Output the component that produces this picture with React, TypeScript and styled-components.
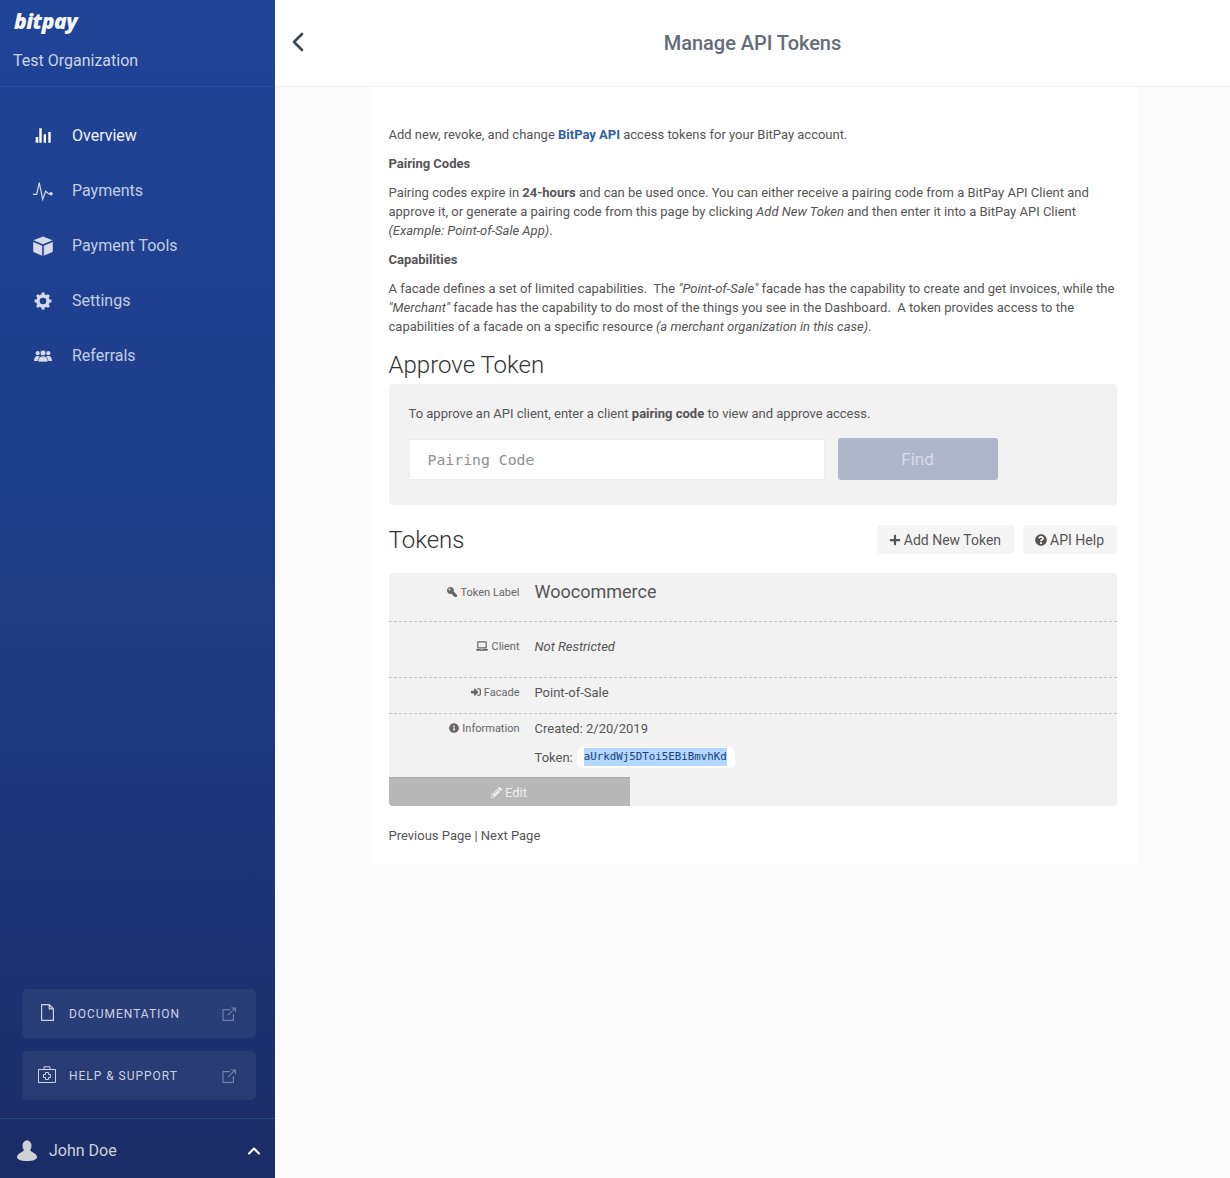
import { FC, ReactNode } from 'react';
import styled, { createGlobalStyle } from 'styled-components';
import { FaInfoCircle, FaKey, FaLaptop, FaPencilAlt, FaPlus, FaQuestionCircle, FaSignInAlt } from 'react-icons/fa';
import { FiChevronLeft, FiChevronUp } from 'react-icons/fi';

const GlobalStyle = createGlobalStyle`
  html, body { margin: 0; padding: 0; }
  body { font-family: Roboto, "Liberation Sans", sans-serif; color: #555; background: #fbfbfb; }
  * { box-sizing: border-box; }
`;

const Page = styled.div`
  display: flex;
  width: 1230px;
  height: 1178px;
  overflow: hidden;
`;

const Sidebar = styled.aside`
  width: 275px;
  flex: none;
  display: flex;
  flex-direction: column;
  background: linear-gradient(180deg, #1f4496 0%, #1f3e8a 40%, #1b2d66 100%);
  color: #fff;
`;

const Brand = styled.div`
  height: 87px;
  padding: 6px 0 0 14px;
  border-bottom: 1px solid rgba(255, 255, 255, 0.06);
`;

const Logo = styled.div`
  font-family: 'Open Sans', sans-serif;
  font-style: italic;
  font-weight: 800;
  font-size: 21px;
  line-height: 30px;
  letter-spacing: -0.5px;
  color: #f4f6fb;
`;

const OrgName = styled.div`
  margin: 14px 0 0 -1px;
  font-size: 16px;
  line-height: 22px;
  color: #ccd4e8;
`;

const Nav = styled.nav`
  flex: 1;
  padding-top: 21px;
`;

const NavItem = styled.div<{ $active?: boolean }>`
  height: 55px;
  display: flex;
  align-items: center;
  font-size: 16px;
  color: ${(p) => (p.$active ? '#f2f4fa' : '#c3cde6')};
`;

const NavIcon = styled.span<{ $active?: boolean }>`
  width: 72px;
  padding-left: 33px;
  display: flex;
  color: ${(p) => (p.$active ? '#ffffff' : '#d5dbec')};
`;

const ExternalLink = styled.div`
  height: 49px;
  margin: 0 19px 13px 22px;
  padding: 0 19px 0 16px;
  display: flex;
  align-items: center;
  border-radius: 5px;
  background: rgba(255, 255, 255, 0.06);
  font-size: 12px;
  letter-spacing: 0.97px;
  color: #ccd3e6;
`;

const LinkIcon = styled.span`
  width: 31px;
  padding-bottom: 3px;
  display: flex;
`;

const LinkText = styled.span`
  flex: 1;
`;

const UserRow = styled.div`
  height: 60px;
  margin-top: 5px;
  padding: 4px 11px 0 17px;
  display: flex;
  align-items: center;
  border-top: 1px solid rgba(70, 130, 130, 0.35);
  font-size: 16px;
  color: #ccd1de;
`;

const UserName = styled.span`
  flex: 1;
  margin-left: 12px;
`;

const Main = styled.main`
  flex: 1;
  min-width: 0;
`;

const Header = styled.header`
  height: 87px;
  display: flex;
  align-items: center;
  justify-content: center;
  position: relative;
  background: #fff;
  border-bottom: 1px solid #eeeeee;
`;

const BackButton = styled.span`
  position: absolute;
  left: 7px;
  top: 26px;
  display: flex;
  color: #3f4654;
`;

const Title = styled.h1`
  margin: 0;
  font-size: 20px;
  font-weight: 500;
  letter-spacing: -0.03px;
  color: #666b78;
`;

const Card = styled.section`
  width: 769px;
  margin-left: 94px;
  padding: 38px 21px 19px 19.5px;
  background: #fff;
`;

const Para = styled.p`
  margin: 0 0 10px;
  font-size: 13px;
  line-height: 19px;
`;

const ApiLink = styled.b`
  color: #2f5f9e;
  font-weight: 700;
`;

const SectionTitle = styled.h2`
  margin: 15px 0 0;
  font-size: 24px;
  font-weight: 300;
  line-height: 29px;
  color: #333;
`;

const ApproveBox = styled.div`
  height: 121px;
  margin-top: 4px;
  padding: 20px 20px 0;
  background: #f2f2f2;
  border-radius: 4px;
`;

const ApproveForm = styled.div`
  display: flex;
  align-items: center;
  margin-top: 15px;
  gap: 13px;
`;

const CodeInput = styled.input`
  width: 416px;
  height: 41px;
  padding: 0 18px;
  border: 1px solid #ececec;
  background: #fff;
  font-family: 'DejaVu Sans Mono', monospace;
  font-size: 14.8px;
  outline: none;
  &::placeholder { color: #8f8f8f; opacity: 1; }
`;

const FindButton = styled.button`
  width: 160px;
  height: 42px;
  border: 0;
  border-radius: 3px;
  background: #aeb7ca;
  font-family: inherit;
  font-size: 17px;
  color: #d8dce5;
`;

const TokensBar = styled.div`
  display: flex;
  align-items: flex-start;
  margin-top: 20px;
  gap: 9px;
`;

const TokensTitle = styled(SectionTitle)`
  flex: 1;
  margin-top: 1px;
`;

const SmallButton = styled.span`
  height: 29px;
  padding: 0 13px 0 12px;
  display: flex;
  align-items: center;
  gap: 3px;
  background: #f5f5f5;
  border-radius: 3px;
  font-size: 14px;
  color: #555;
`;

const TokenCard = styled.div`
  margin-top: 18px;
  background: #f2f2f2;
  border-radius: 4px;
  overflow: hidden;
`;

const TokenRow = styled.div<{ $height: number; $top?: number; $last?: boolean }>`
  display: flex;
  height: ${(p) => p.$height}px;
  padding-top: ${(p) => p.$top ?? 0}px;
  border-bottom: ${(p) => (p.$last ? '0' : '1px dashed #c4c4c4')};
`;

const RowLabel = styled.div`
  width: 131px;
  height: 28px;
  display: flex;
  align-items: center;
  justify-content: flex-end;
  gap: 3px;
  font-size: 11px;
  color: #666;
`;

const RowValue = styled.div`
  margin-left: 15px;
  font-size: 13px;
  color: #555;
`;

const FlippedKey = styled(FaKey)`
  transform: scaleX(-1);
`;

const TokenName = styled.div`
  font-size: 18px;
  line-height: 28px;
`;

const ValueLine = styled.div<{ $gap?: number }>`
  display: flex;
  align-items: center;
  height: 28px;
  margin-top: ${(p) => p.$gap ?? 0}px;
`;

const TokenChip = styled.span`
  margin-left: 4px;
  padding: 0 8px 0 7px;
  height: 21px;
  display: flex;
  align-items: center;
  background: #fff;
  border-radius: 5px;
  font-family: 'DejaVu Sans Mono', monospace;
  font-size: 10.8px;
  color: #14407f;
`;

const Selected = styled.span`
  line-height: 18px;
  background: #b3d7ff;
`;

const EditButton = styled.div`
  width: 241px;
  height: 29px;
  display: flex;
  align-items: center;
  justify-content: center;
  gap: 3px;
  background: #b8b8b8;
  border-top: 1px solid #aaa;
  font-size: 13px;
  color: #eee;
`;

const Pager = styled.div`
  margin-top: 20px;
  font-size: 13px;
  line-height: 19px;
  color: #555;
`;

const Label: FC<{ icon: ReactNode; children: ReactNode }> = ({ icon, children }) => (
  <RowLabel>
    {icon}
    {children}
  </RowLabel>
);

const OverviewIcon = () => (
  <svg width="20" height="20" viewBox="0 0 20 20" fill="currentColor">
    <path d="M2.7 11h2.6v5.7H2.7zM6.3 2.3h2.4v14.4H6.3zM10.7 8.3H13v8.4h-2.3zM15.3 6h2.4v10.7h-2.4z" />
  </svg>
);

const PaymentsIcon = () => (
  <svg width="20" height="20" viewBox="0 0 20 20" fill="none" stroke="currentColor" strokeWidth="1.2">
    <path d="M0 13.3h3.7L6.3 1.7l3.4 16.6 3-8.3 2.6 2.7H18" />
    <circle cx="18" cy="12.7" r="1.8" fill="currentColor" stroke="none" />
  </svg>
);

const CubeIcon = () => (
  <svg width="20" height="20" viewBox="0 0 20 20" fill="currentColor">
    <path d="M10 .4l9.6 3.9L10 8.3.4 4.3zM.2 5.9l9 3.8v10L1 16.2a1.2 1.2 0 0 1-.8-1.1zM19.8 5.9l-9 3.8v10l8.2-3.5a1.2 1.2 0 0 0 .8-1.1z" />
  </svg>
);

const GearIcon = () => (
  <svg width="20" height="20" viewBox="0 0 20 20" fill="none" stroke="currentColor">
    <circle cx="10" cy="10" r="5" strokeWidth="3.4" />
    {[0, 45, 90, 135].map((angle) => (
      <path key={angle} d="M10 1.6v16.8" strokeWidth="3" transform={`rotate(${angle} 10 10)`} strokeDasharray="2.6 11.6" />
    ))}
  </svg>
);

const ReferralsIcon = () => (
  <svg width="20" height="20" viewBox="0 0 20 20" fill="currentColor">
    <circle cx="4.7" cy="7.2" r="2.1" />
    <circle cx="15.3" cy="7.2" r="2.1" />
    <path d="M1 15c0-3.4 1.4-5 3.7-5s3.7 1.6 3.7 5zM11.6 15c0-3.4 1.4-5 3.7-5s3.7 1.6 3.7 5z" />
    <circle cx="10" cy="7" r="2.9" stroke="#1f3d88" strokeWidth=".7" />
    <path d="M5 16c0-4 2-6 5-6s5 2 5 6z" stroke="#1f3d88" strokeWidth=".7" />
  </svg>
);

const DocIcon = () => (
  <svg width="19" height="17" viewBox="0 0 19 17" fill="none" stroke="currentColor" strokeWidth="1.2">
    <path d="M3.6.6h7.6l4.2 4.2v11.6H3.6zM11.2.6v4.2h4.2" />
  </svg>
);

const KitIcon = () => (
  <svg width="19" height="17" viewBox="0 0 19 17" fill="none" stroke="currentColor">
    <path d="M.5 3.5h17v13H.5zM6 3.5V.8h6v2.7M7.5 6.5h3v2h2v3h-2v2h-3v-2h-2v-3h2z" />
  </svg>
);

const ExternalIcon = () => (
  <svg width="15" height="14" viewBox="0 0 15 14" fill="none" stroke="#6f7ea8" strokeWidth="1.2">
    <path d="M8 2.6H1v10.8h10.400V7M6 8.200L13 1M9 1h4.400v4.200" />
  </svg>
);

const UserIcon = () => (
  <svg width="20" height="21" viewBox="0 0 20 21" fill="#cfd0d4">
    <ellipse cx="10" cy="6" rx="4.5" ry="5.8" />
    <path d="M7 9.5c0 2.5-7 3.500-7 7.500 0 2.500 4 4 10 4s10-1.500 10-4c0-4-7-5-7-7.500z" />
  </svg>
);

export default function App() {
  return (
    <>
      <GlobalStyle />
      <Page>
        <Sidebar>
          <Brand>
            <Logo>bitpay</Logo>
            <OrgName>Test Organization</OrgName>
          </Brand>
          <Nav>
            <NavItem $active>
              <NavIcon $active>
                <OverviewIcon />
              </NavIcon>
              Overview
            </NavItem>
            <NavItem>
              <NavIcon>
                <PaymentsIcon />
              </NavIcon>
              Payments
            </NavItem>
            <NavItem>
              <NavIcon>
                <CubeIcon />
              </NavIcon>
              Payment Tools
            </NavItem>
            <NavItem>
              <NavIcon>
                <GearIcon />
              </NavIcon>
              Settings
            </NavItem>
            <NavItem>
              <NavIcon>
                <ReferralsIcon />
              </NavIcon>
              Referrals
            </NavItem>
          </Nav>
          <ExternalLink>
            <LinkIcon>
              <DocIcon />
            </LinkIcon>
            <LinkText>DOCUMENTATION</LinkText>
            <ExternalIcon />
          </ExternalLink>
          <ExternalLink>
            <LinkIcon>
              <KitIcon />
            </LinkIcon>
            <LinkText>HELP &amp; SUPPORT</LinkText>
            <ExternalIcon />
          </ExternalLink>
          <UserRow>
            <UserIcon />
            <UserName>John Doe</UserName>
            <FiChevronUp size={20} color="#fff" strokeWidth={2.5} />
          </UserRow>
        </Sidebar>
        <Main>
          <Header>
            <BackButton>
              <FiChevronLeft size={32} />
            </BackButton>
            <Title>Manage API Tokens</Title>
          </Header>
          <Card>
            <Para>
              Add new, revoke, and change <ApiLink>BitPay API</ApiLink> access tokens for your BitPay account.
            </Para>
            <Para>
              <b>Pairing Codes</b>
            </Para>
            <Para>
              Pairing codes expire in <b>24-hours</b> and can be used once. You can either receive a pairing code from a
              BitPay API Client and approve it, or generate a pairing code from this page by clicking{' '}
              <i>Add New Token</i> and then enter it into a BitPay API Client <i>(Example: Point-of-Sale App)</i>.
            </Para>
            <Para>
              <b>Capabilities</b>
            </Para>
            <Para>
              A facade defines a set of limited capabilities.&nbsp; The <i>"Point-of-Sale"</i> facade has the capability
              to create and get invoices, while the <i>"Merchant"</i> facade has the capability to do most of the things
              you see in the Dashboard.&nbsp; A token provides access to the capabilities of a facade on a specific
              resource <i>(a merchant organization in this case)</i>.
            </Para>
            <SectionTitle>Approve Token</SectionTitle>
            <ApproveBox>
              <Para>
                To approve an API client, enter a client <b>pairing code</b> to view and approve access.
              </Para>
              <ApproveForm>
                <CodeInput placeholder="Pairing Code" />
                <FindButton>Find</FindButton>
              </ApproveForm>
            </ApproveBox>
            <TokensBar>
              <TokensTitle>Tokens</TokensTitle>
              <SmallButton>
                <FaPlus size={12} /> Add New Token
              </SmallButton>
              <SmallButton>
                <FaQuestionCircle size={12} /> API Help
              </SmallButton>
            </TokensBar>
            <TokenCard>
              <TokenRow $height={49} $top={5}>
                <Label icon={<FlippedKey size={10} />}>Token Label</Label>
                <RowValue>
                  <TokenName>Woocommerce</TokenName>
                </RowValue>
              </TokenRow>
              <TokenRow $height={56} $top={10}>
                <Label icon={<FaLaptop size={12} />}>Client</Label>
                <RowValue>
                  <ValueLine>
                    <i>Not Restricted</i>
                  </ValueLine>
                </RowValue>
              </TokenRow>
              <TokenRow $height={36}>
                <Label icon={<FaSignInAlt size={10} />}>Facade</Label>
                <RowValue>
                  <ValueLine>Point-of-Sale</ValueLine>
                </RowValue>
              </TokenRow>
              <TokenRow $height={63} $last>
                <Label icon={<FaInfoCircle size={10} />}>Information</Label>
                <RowValue>
                  <ValueLine>Created: 2/20/2019</ValueLine>
                  <ValueLine $gap={1}>
                    Token:
                    <TokenChip>
                      <Selected>aUrkdWj5DToi5EBiBmvhKd</Selected>
                    </TokenChip>
                  </ValueLine>
                </RowValue>
              </TokenRow>
              <EditButton>
                <FaPencilAlt size={11} /> Edit
              </EditButton>
            </TokenCard>
            <Pager>Previous Page | Next Page</Pager>
          </Card>
        </Main>
      </Page>
    </>
  );
}
